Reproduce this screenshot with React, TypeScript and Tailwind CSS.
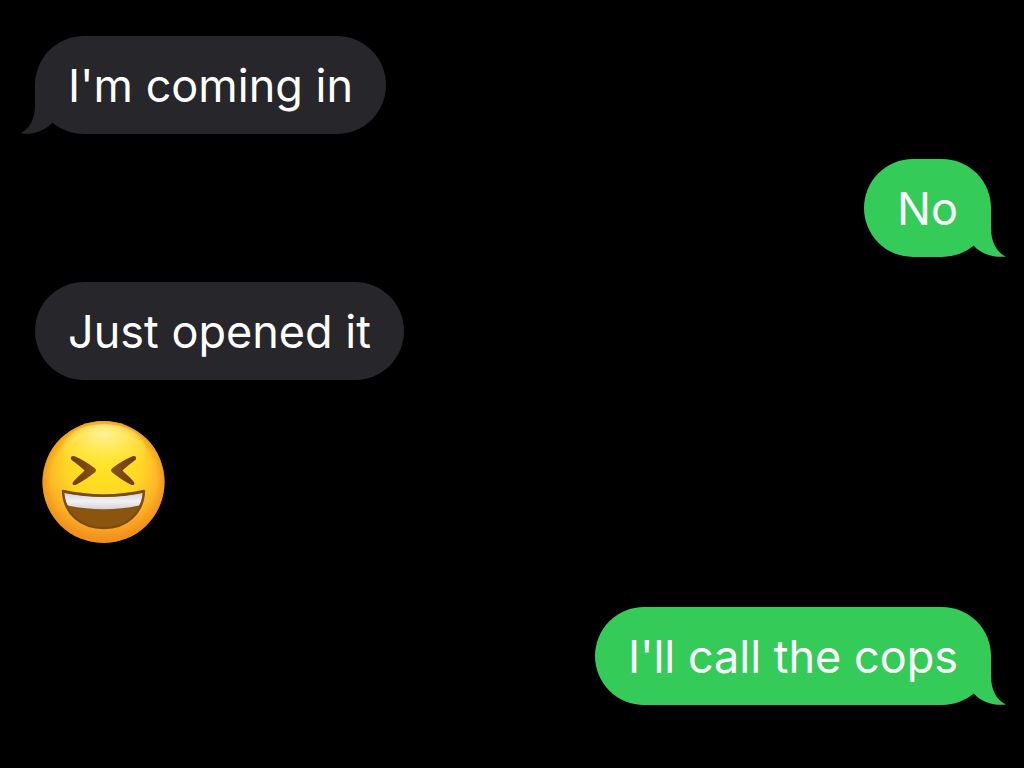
type Side = 'received' | 'sent';

function Tail({ side }: { side: Side }) {
  return (
    <svg
      viewBox="0 0 45 50"
      aria-hidden="true"
      className={
        side === 'sent'
          ? 'absolute -right-[15px] bottom-0 h-[50px] w-[45px] fill-[#34cb59]'
          : 'absolute -left-[15px] bottom-0 h-[50px] w-[45px] -scale-x-100 fill-[#27262b]'
      }
    >
      <path d="M30 0V21C30 34 35 45 45 49.6C33 51 20 47 12.5 38.5L0 26V0Z" />
    </svg>
  );
}

function Bubble({ side, text, tail = false }: { side: Side; text: string; tail?: boolean }) {
  return (
    <div
      className={
        side === 'sent'
          ? 'relative flex h-[98px] items-center self-end rounded-[49px] bg-[#34cb59] px-[33px] text-white'
          : 'relative flex h-[98px] items-center self-start rounded-[49px] bg-[#27262b] px-[33px] text-white'
      }
    >
      {tail && <Tail side={side} />}
      <p className="relative pt-0.5 whitespace-nowrap">{text}</p>
    </div>
  );
}

function LaughingFace() {
  return (
    <svg viewBox="0 0 124 124" role="img" aria-label="Laughing face" className="h-[124px] w-[124px]">
      <defs>
        <radialGradient id="face" cx="62" cy="44" r="80" gradientUnits="userSpaceOnUse">
          <stop offset="0" stopColor="#ffe321" />
          <stop offset="0.45" stopColor="#ffd824" />
          <stop offset="0.7" stopColor="#fcb827" />
          <stop offset="0.86" stopColor="#f79d20" />
          <stop offset="1" stopColor="#ee8716" />
        </radialGradient>
        <radialGradient id="rim" cx="61.5" cy="62" r="61" gradientUnits="userSpaceOnUse">
          <stop offset="0.86" stopColor="#f29a1c" stopOpacity="0" />
          <stop offset="1" stopColor="#ef921a" stopOpacity="0.7" />
        </radialGradient>
        <radialGradient id="shine" cx="0.5" cy="0.2" r="0.75">
          <stop offset="0" stopColor="#fff7b0" stopOpacity="0.85" />
          <stop offset="1" stopColor="#ffec48" stopOpacity="0" />
        </radialGradient>
        <linearGradient id="teeth" x1="0" y1="0" x2="0" y2="1">
          <stop offset="0" stopColor="#d2d2da" />
          <stop offset="0.5" stopColor="#f1f1f5" />
          <stop offset="1" stopColor="#d5d3da" />
        </linearGradient>
        <linearGradient id="eye" x1="0" y1="0" x2="1" y2="0">
          <stop offset="0" stopColor="#6b3d0b" />
          <stop offset="1" stopColor="#8a501a" />
        </linearGradient>
        <clipPath id="mouth">
          <path d="M21 71Q62 80 102 71C101 94 84 108 62 108C39 108 22 94 21 71Z" />
        </clipPath>
      </defs>
      <circle cx="61.5" cy="62" r="61" fill="url(#face)" />
      <circle cx="61.5" cy="62" r="61" fill="url(#rim)" />
      <ellipse cx="62" cy="30" rx="42" ry="26" fill="url(#shine)" />
      <path
        id="squint"
        d="M29.5 36.5C28.3 38 28.8 39.3 30 40.2C35 44 39 47 42.5 50.5C39 54 35 57.5 31.5 61.5C30.3 63 30.3 64.2 31.2 64.8C32 65.4 33.5 65 34.5 64.4C42 60.5 48 56.5 53 52.3C54.3 51 54.3 49.7 52.8 48.3C46 42.8 39 38.8 32.5 36.2C31.2 35.8 30.2 35.8 29.5 36.5Z"
        fill="url(#eye)"
      />
      <use href="#squint" transform="matrix(-1 0 0 1 123 0)" />
      <g clipPath="url(#mouth)">
        <rect x="20" y="68" width="84" height="42" fill="#8b5510" />
        <path d="M22 73Q62 81 101 73C100 80 99 83 97 85.5Q62 93 26 85.5C24 83 23 80 22 73Z" fill="url(#teeth)" />
      </g>
      <path
        d="M21 71Q62 80 102 71C101 94 84 108 62 108C39 108 22 94 21 71Z"
        fill="none"
        stroke="#7c4b10"
        strokeWidth="2.4"
        strokeLinejoin="round"
      />
    </svg>
  );
}

export default function App() {
  return (
    <main className="flex min-h-screen flex-col bg-black pt-9 pr-[33px] pb-[62px] pl-[35px] font-['Inter','Liberation_Sans',sans-serif] text-[45px] leading-[56px]">
      <div className="flex flex-col gap-[25px]">
        <Bubble side="received" text="I'm coming in" tail />
        <Bubble side="sent" text="No" tail />
        <Bubble side="received" text="Just opened it" />
      </div>
      <div className="mt-10 ml-[7px] self-start">
        <LaughingFace />
      </div>
      <div className="mt-[63px] flex flex-col">
        <Bubble side="sent" text="I'll call the cops" tail />
      </div>
    </main>
  );
}
